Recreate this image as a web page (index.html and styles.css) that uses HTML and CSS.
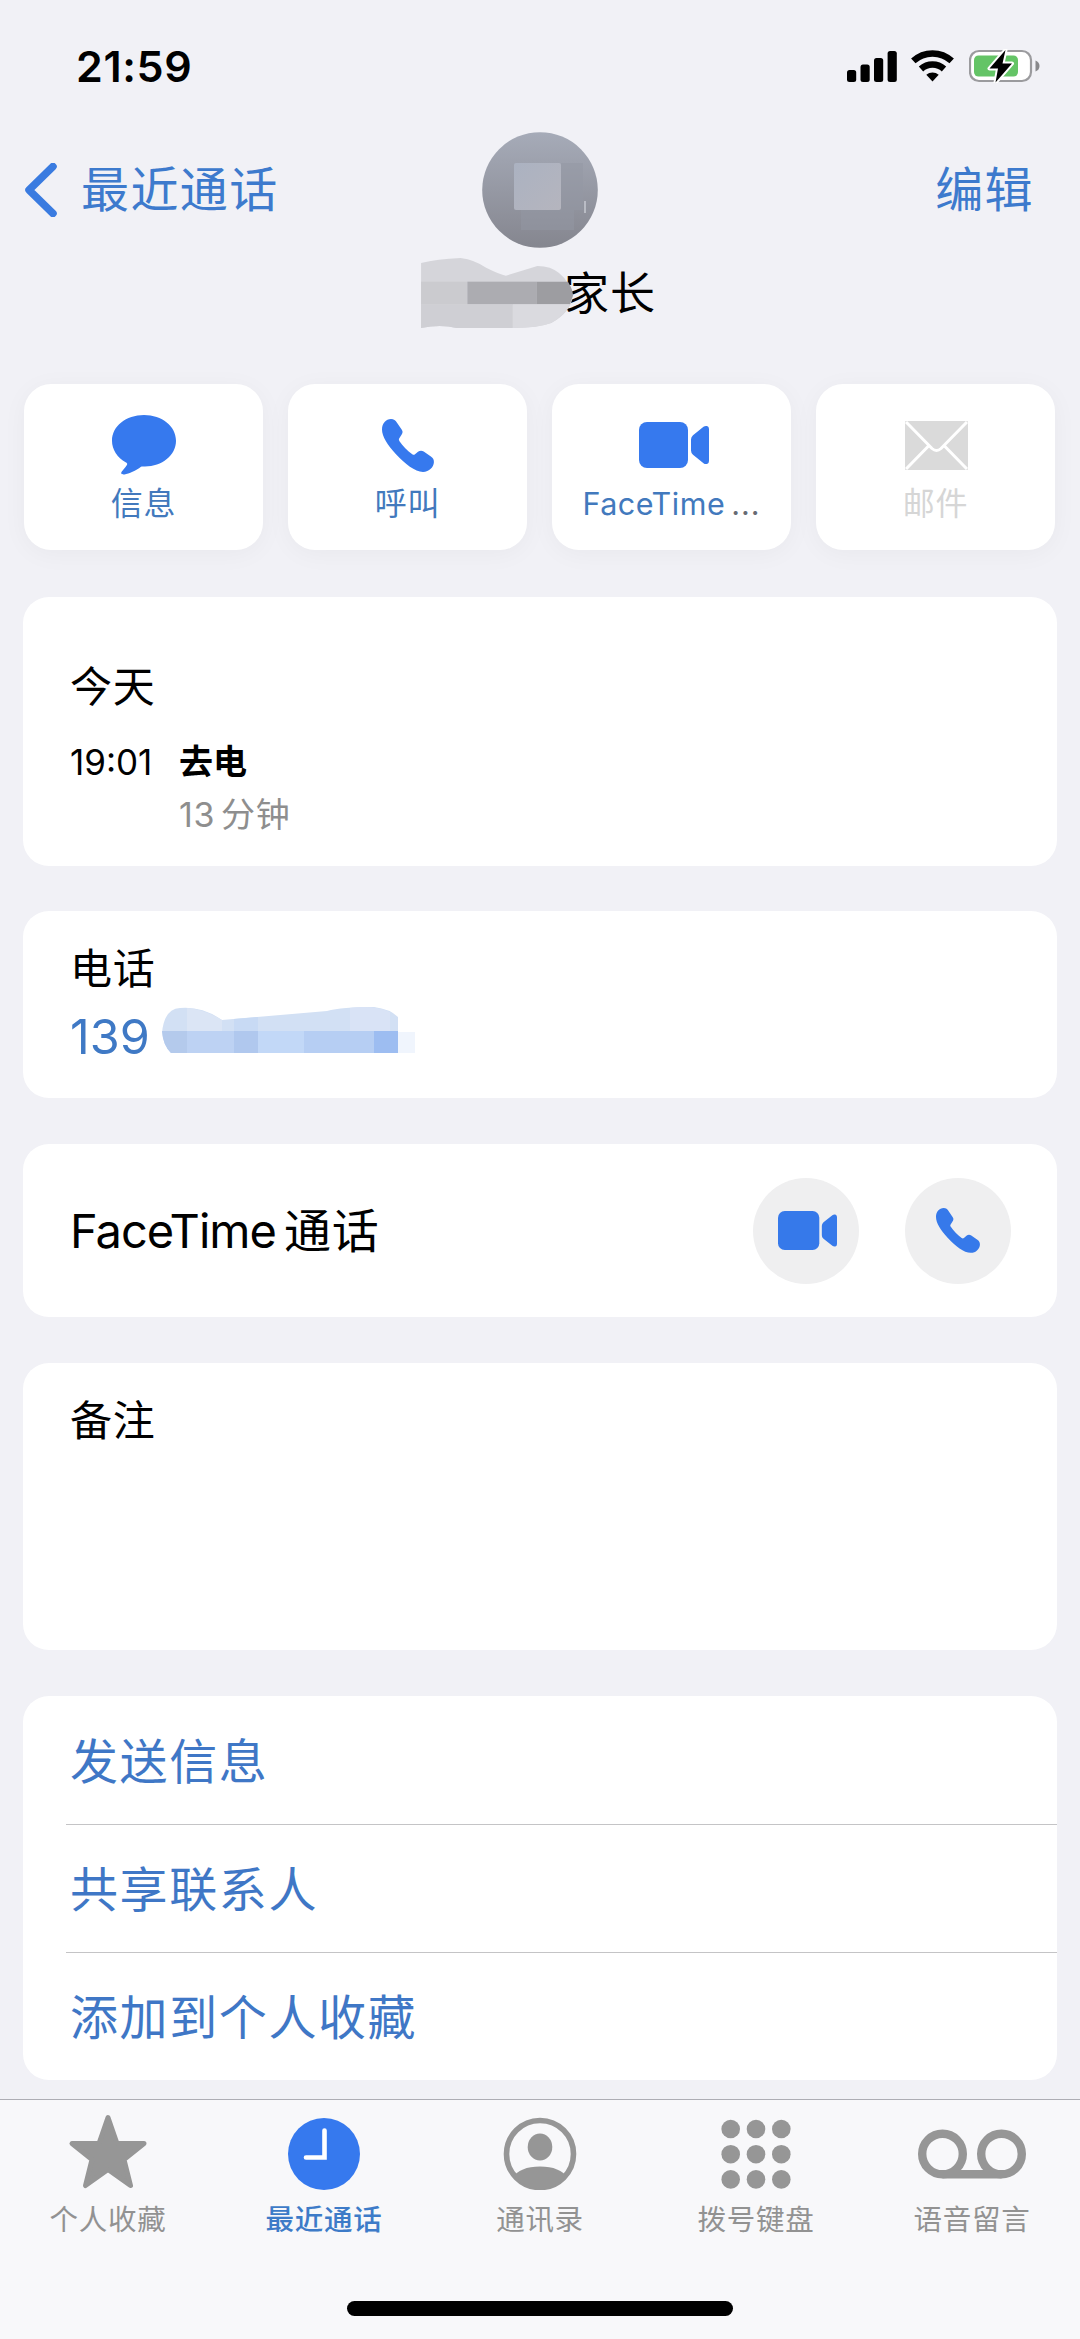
FILE: index.html
```html
<!DOCTYPE html>
<html lang="zh-CN">
<head>
<meta charset="utf-8">
<title>最近通话</title>
<link rel="stylesheet" href="styles.css">
</head>
<body>
<svg class="defs" aria-hidden="true">
  <symbol id="phone" viewBox="0 0 52 53">
    <path d="M9 0C12 0 13.300 1.200 15 3.700L19.800 10.800C20.900 12.400 20.800 13.800 19.700 15.600L17.300 19.300C16.700 20.300 16.800 21.100 17.500 22.200C20.600 27 25.500 32 30.300 35.300C31.300 36 32.100 36 33 35.300L36 32.800C37.800 31.400 39.700 31.200 41.700 32.500L48.900 37.400C51.200 39 52 40.700 51.900 43.200C51.700 48 47.300 52.800 41 52.900C33 52.900 23 45 14 35.300C5.500 26 0 17.500 0 10.500C0 4.500 4 0 9 0Z"/>
  </symbol>
  <symbol id="video" viewBox="0 0 70 46">
    <rect width="49" height="46" rx="8"/>
    <path d="M52 17.500Q52 15 54 13.200L64.500 4.800Q66 3.600 68 4Q70 4.600 70 7V39Q70 41.400 68 42Q66 42.400 64.500 41.200L54 32.800Q52 31 52 28.500Z"/>
  </symbol>
</svg>
<div class="screen">
  <div class="statusbar">
    <div class="clock">21:59</div>
    <div class="indicators">
      <svg class="signal" viewBox="0 0 50 31"><rect y="19" width="9.200" height="12" rx="2.500"/><rect x="13.500" y="13.500" width="9.200" height="17.500" rx="2.500"/><rect x="27" y="7" width="9.200" height="24" rx="2.500"/><rect x="40.600" width="9.200" height="31" rx="2.500"/></svg>
      <svg class="wifi" viewBox="0 0 43 32"><g fill="none" stroke="#000" stroke-width="6.500"><path d="M2.300 10.900A28.300 28.300 0 0 1 40.700 10.900"/><path d="M10 19A17.200 17.200 0 0 1 33 19"/></g><path d="M15.300 24.800A9.500 9.500 0 0 1 27.700 24.800L21.500 31.500Z"/></svg>
      <svg class="battery" viewBox="0 0 71 34"><rect x="1" y="2" width="61" height="30" rx="9" fill="#fff" stroke="#9b9b9e" stroke-width="2.200"/><rect x="5" y="6.500" width="44" height="21" rx="4.500" fill="#64c466"/><path d="M66.500 11.500Q70.500 13 70.500 17T66.500 22.500Z" fill="#88888b"/><path d="M36.500 1L20.500 19.500H29L26.500 33.500L43 14.500H33.500Z" fill="#000" stroke="#fff" stroke-width="4" stroke-linejoin="round" paint-order="stroke"/></svg>
    </div>
  </div>

  <div class="navbar">
    <div class="back">
      <svg class="chevron" viewBox="0 0 32 54"><path d="M28 3.500L4 27L28 50.500"/></svg>
      <span>最近通话</span>
    </div>
    <svg class="avatar" viewBox="0 0 116 116">
      <defs>
        <linearGradient id="av" x1="0" y1="0" x2="0" y2="1"><stop offset="0" stop-color="#a6abb8"/><stop offset="1" stop-color="#85868f"/></linearGradient>
        <linearGradient id="sq" x1="0" y1="0" x2="1" y2="1"><stop offset="0" stop-color="#abb2c1"/><stop offset="1" stop-color="#b5b5be"/></linearGradient>
      </defs>
      <circle cx="58" cy="58" r="57.800" fill="url(#av)"/>
      <path d="M79 31H101V78H39V98H92V78H79Z" fill="#9397a3" opacity=".5"/>
      <rect x="32" y="31" width="47" height="47" rx="2" fill="url(#sq)"/>
      <path d="M103 69V81" stroke="#c7cad2" stroke-width="1.500"/>
    </svg>
    <div class="edit">编辑</div>
  </div>

  <div class="contact">
    <svg class="name-mask" viewBox="0 0 154 72">
      <path d="M0 5Q16 1 40 0Q55 2 66 10Q80 17 86 18L118 8Q145 8 154 38Q152 55 132 66Q118 71 96 71L36 71Q20 67 0 71Z" fill="#d5d5da"/>
      <rect y="24" width="47" height="23" fill="#cbcbcf"/>
      <rect x="47" y="24" width="70" height="23" fill="#acacb1"/>
      <path d="M117 24H149Q154 32 154 38L151 47H117Z" fill="#9d9da1"/>
      <path d="M0 47H93V71H36Q20 67 0 71Z" fill="#cfcfd4"/>
      <path d="M93 47H151Q146 58 132 66Q118 71 93 71Z" fill="#dadadf"/>
    </svg>
    <span class="name">家长</span>
  </div>

  <div class="actions">
    <div class="action"><svg class="act-chat" viewBox="0 0 64 60"><path d="M32 0C50 0 64 11.200 64 25.800C64 40.500 50 51.500 33 51.500C31 51.500 29.700 51.400 29 51.700C24 55.500 17 58.800 12.500 59.400C9.500 59.800 8.300 58.300 10 56.300C12.500 53.500 15.200 50 15.200 49C15.200 48.200 14.800 48 14 47.500C5 42.500 0 34.500 0 25.800C0 11.200 14 0 32 0Z"/></svg><span>信息</span></div>
    <div class="action"><svg class="act-phone"><use href="#phone"/></svg><span>呼叫</span></div>
    <div class="action"><svg class="act-video"><use href="#video"/></svg><span class="latin">FaceTime&thinsp;<span class="dots">...</span></span></div>
    <div class="action disabled"><svg class="act-mail" viewBox="0 0 63 49"><rect width="63" height="49" rx="1" fill="#dadada"/><path d="M1 1L27 27.500Q31.500 31.500 36 27.500L62 1M1 48L24 24.500M62 48L39 24.500" fill="none" stroke="#fff" stroke-width="3"/></svg><span>邮件</span></div>
  </div>

  <div class="card history">
    <div class="label">今天</div>
    <div class="call">
      <div class="time">19:01</div>
      <div class="detail"><b>去电</b><span>13<i></i>分钟</span></div>
    </div>
  </div>

  <div class="card phone">
    <div class="label">电话</div>
    <div class="number"><span>139</span>
      <svg viewBox="0 0 256 48">
        <path d="M0 26Q2 2 18 1Q40 -1 60 13L130 7L165 4Q180 0 212 0Q228 2 236 10V24H0Z" fill="#d2e0f4"/>
        <path d="M0 24H236V46H9Q1 38 0 24Z" fill="#bdd2f3"/>
        <path d="M0 24H25V46H9Q1 38 0 24Z" fill="#b4caec"/>
        <path d="M72 24H96V46H72Z" fill="#b0c8ee"/>
        <path d="M96 24H142V46H96Z" fill="#c2d8f7"/>
        <path d="M142 24H212V46H142Z" fill="#b6cef3"/>
        <path d="M212 24H236V46H212Z" fill="#9dbdf1"/>
        <path d="M25 1Q42 2 60 13V24H25Z" fill="#dbe5f5"/>
        <path d="M188 1Q212 -2 228 5V24H188Z" fill="#d9e3f6"/>
        <path d="M72 12L96 10V24H72Z" fill="#c8daf4"/>
        <path d="M236 25H253V46H236Z" fill="#f0f5fd"/>
      </svg>
    </div>
  </div>

  <div class="card facetime">
    <div class="title">FaceTime<span>通话</span></div>
    <div class="round"><svg class="ft-video"><use href="#video"/></svg></div>
    <div class="round"><svg class="ft-phone"><use href="#phone"/></svg></div>
  </div>

  <div class="card notes"><div class="label">备注</div></div>

  <div class="card links">
    <div class="link">发送信息</div>
    <div class="link">共享联系人</div>
    <div class="link">添加到个人收藏</div>
  </div>

  <div class="tabbar">
    <div class="tabs">
      <div class="tab"><svg viewBox="0 0 108 76"><path d="M54 3.500L63 29.500H90L70 45.500L76.500 71.500L54 55.500L31.500 71.500L38 45.500L18 29.500H45Z" stroke="#969696" stroke-width="5" stroke-linejoin="round"/></svg><span>个人收藏</span></div>
      <div class="tab active"><svg viewBox="0 0 108 76"><circle cx="54" cy="40" r="36"/><path d="M54.500 16.500V43.500H36" fill="none" stroke="#fff" stroke-width="4.600" stroke-linecap="round"/></svg><span>最近通话</span></div>
      <div class="tab"><svg viewBox="0 0 108 76"><clipPath id="person"><circle cx="54" cy="40" r="34"/></clipPath><circle cx="54" cy="40" r="33.500" fill="none" stroke="#969696" stroke-width="5.600"/><ellipse cx="54" cy="33" rx="12.300" ry="13.600"/><path clip-path="url(#person)" d="M26 64Q34 52.500 54 52.500T82 64V80H26Z"/></svg><span>通讯录</span></div>
      <div class="tab"><svg viewBox="0 0 108 76"><g id="dots"><circle cx="28.700" cy="15" r="9.300"/><circle cx="54" cy="15" r="9.300"/><circle cx="79.300" cy="15" r="9.300"/></g><use href="#dots" y="25.200"/><use href="#dots" y="50.400"/></svg><span>拨号键盘</span></div>
      <div class="tab"><svg viewBox="0 0 108 76"><g fill="none" stroke="#969696" stroke-width="8.400"><circle cx="24.500" cy="40" r="20.300"/><circle cx="83.500" cy="40" r="20.300"/><path d="M24.500 60.300H83.500"/></g></svg><span>语音留言</span></div>
    </div>
    <div class="home"></div>
  </div>
</div>
</body>
</html>
```
FILE: styles.css
```css
* { box-sizing: border-box; }

body {
  margin: 0;
  background: #f1f1f6;
  color: #000;
  font-family: Inter, "Noto Sans CJK SC", sans-serif;
}

svg { display: block; flex: none; }
.defs { display: none; }

.screen {
  width: 1080px;
  height: 2339px;
  display: flex;
  flex-direction: column;
  overflow: hidden;
}

/* status bar */
.statusbar {
  height: 132px;
  padding: 0 40px 0 76px;
  display: flex;
  justify-content: space-between;
  align-items: center;
}
.clock { font-size: 43px; font-weight: 600; line-height: 50px; letter-spacing: 0.6px; }
.indicators { display: flex; align-items: center; }
.signal { width: 50px; height: 31px; }
.wifi { width: 43px; height: 32px; margin-left: 14px; }
.battery { width: 71px; height: 34px; margin-left: 15px; }

/* navigation */
.navbar {
  height: 116px;
  padding: 0 46px 0 25px;
  display: grid;
  grid-template-columns: 457px 116px 1fr;
  align-items: center;
  color: #3d7acd;
  font-size: 48px;
  line-height: 60px;
  letter-spacing: 1.4px;
}
.back { display: flex; align-items: center; gap: 24px; }
.chevron { width: 32px; height: 54px; }
.chevron path {
  fill: none;
  stroke: #3a7be0;
  stroke-width: 7.5;
  stroke-linecap: round;
  stroke-linejoin: round;
}
.avatar { width: 116px; height: 116px; }
.edit { text-align: right; }

.contact {
  height: 136px;
  padding: 10px 0 0 420px;
  display: flex;
  align-items: flex-start;
}
.name-mask { width: 154px; height: 71px; z-index: 1; }
.name {
  margin: 11px 0 0 -10px;
  font-size: 45px;
  line-height: 50px;
  letter-spacing: 1px;
}

/* quick actions */
.actions {
  padding: 0 24px;
  display: grid;
  grid-template-columns: repeat(4, 239px);
  gap: 25px;
}
.action {
  height: 166px;
  border-radius: 27px;
  background: #fff;
  box-shadow: 0 4px 26px rgba(0, 0, 0, 0.04);
  display: grid;
  grid-template-rows: 98px 20px;
  align-content: start;
  justify-items: center;
  align-items: center;
  padding-top: 12px;
  color: #4279bd;
  fill: #3679ee;
  font-size: 32px;
  letter-spacing: 0.8px;
  line-height: 40px;
}
.action .latin { font-size: 30.5px; letter-spacing: 0.5px; white-space: nowrap; }
.dots { color: #666b75; letter-spacing: 1px; }
.disabled { color: #d6d6d6; }
.act-chat { width: 64px; height: 60px; }
.act-phone { width: 52px; height: 53px; }
.act-video { width: 70px; height: 46px; margin-left: 5px; }
.act-mail { width: 63px; height: 49px; margin-left: 1px; }

/* cards */
.card {
  margin: 0 23px;
  background: #fff;
  border-radius: 26px;
  padding: 0 47px;
  flex: none;
}
.label { font-size: 42px; line-height: 48px; letter-spacing: 0.8px; }

.history { margin-top: 47px; height: 269px; padding-top: 66px; }
.call { display: flex; margin-top: 29px; font-size: 35px; line-height: 44px; }
.time { width: 109px; }
.detail { display: flex; flex-direction: column; gap: 9px; }
.detail b { font-weight: 600; font-size: 34px; }
.detail span { color: #8e8e8e; font-size: 34px; letter-spacing: 0.6px; }
.detail i { display: inline-block; width: 6px; }

.phone { margin-top: 45px; height: 187px; padding-top: 34px; }
.number { display: flex; margin-top: 14px; color: #3f79c5; font-size: 48.5px; line-height: 60px; }
.number span { width: 92px; }
.number svg { width: 256px; height: 48px; }

.facetime {
  margin-top: 46px;
  height: 173px;
  padding-right: 46px;
  display: flex;
  align-items: center;
  gap: 46px;
}
.title { flex: 1; font-size: 47px; line-height: 60px; white-space: nowrap; letter-spacing: -1px; }
.title span { margin-left: 8px; letter-spacing: 1px; }
.round {
  width: 106px;
  height: 106px;
  border-radius: 50%;
  background: #efeff0;
  fill: #3679ea;
  display: flex;
  align-items: center;
  justify-content: center;
}
.ft-video { width: 59px; height: 39px; margin-left: 3px; }
.ft-phone { width: 44px; height: 45px; }

.notes { margin-top: 46px; height: 287px; padding-top: 34px; }

.links { margin-top: 46px; height: 384px; padding: 0 0 0 43px; }
.link {
  height: 128px;
  padding: 3px 0 0 4px;
  color: #3f77c6;
  font-size: 48px;
  line-height: 125px;
  letter-spacing: 1.6px;
}
.link + .link { border-top: 1px solid #c4c4c6; padding-top: 2px; }

/* tab bar */
.tabbar {
  margin-top: 19px;
  height: 240px;
  flex: none;
  background: #f8f8fa;
  border-top: 1px solid #adadb4;
}
.tabs { display: grid; grid-template-columns: repeat(5, 216px); padding-top: 14px; }
.tab {
  display: flex;
  flex-direction: column;
  align-items: center;
  fill: #969696;
  color: #929292;
  font-size: 28.5px;
  letter-spacing: 0.7px;
  line-height: 36px;
}
.tab svg { width: 108px; height: 76px; }
.tab span { margin-top: 12px; }
.active { fill: #3679ee; color: #3d7bc8; font-weight: 500; }
.home { width: 386px; height: 15px; margin: 63px auto 0; border-radius: 8px; background: #000; }
```
